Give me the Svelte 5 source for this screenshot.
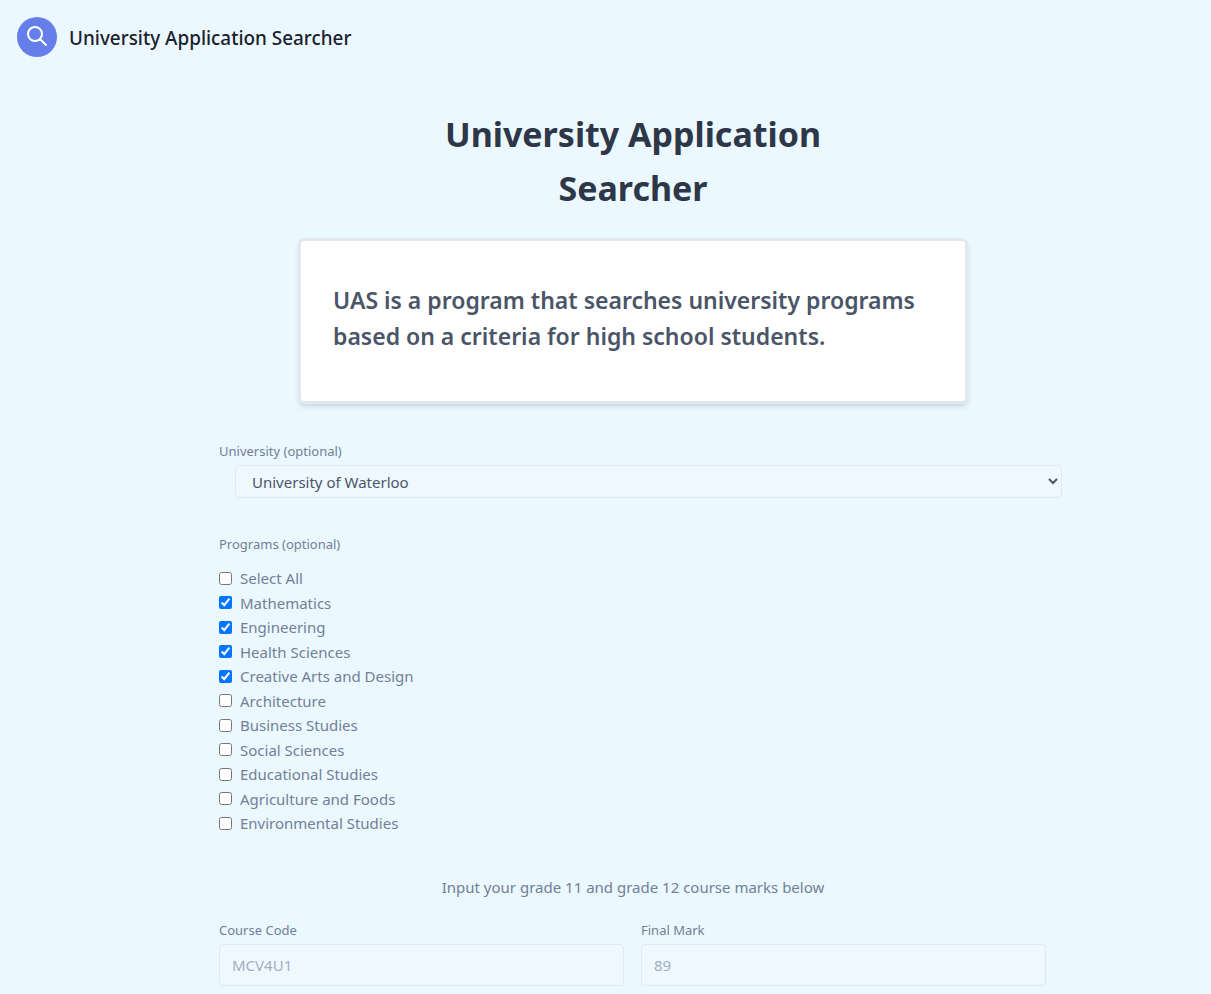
<script>
	const programs = [
		['Select All', false],
		['Mathematics', true],
		['Engineering', true],
		['Health Sciences', true],
		['Creative Arts and Design', true],
		['Architecture', false],
		['Business Studies', false],
		['Social Sciences', false],
		['Educational Studies', false],
		['Agriculture and Foods', false],
		['Environmental Studies', false]
	];
</script>

<header class="nav">
	<span class="logo">
		<svg viewBox="0 0 24 24" width="24" height="24" fill="none" stroke="white" stroke-width="2" stroke-linecap="round" stroke-linejoin="round">
			<path d="M21 21l-6-6m2-5a7 7 0 11-14 0 7 7 0 0114 0z" />
		</svg>
	</span>
	<span class="brand">University Application Searcher</span>
</header>

<main>
	<h1>University Application<br />Searcher</h1>

	<div class="card">
		<p>UAS is a program that searches university programs based on a criteria for high school students.</p>
	</div>

	<form>
		<label class="lbl" for="uni">University (optional)</label>
		<select id="uni" class="uni">
			<option>University of Waterloo</option>
		</select>

		<div class="lbl prog">Programs (optional)</div>
		<div class="checks">
			{#each programs as [name, on]}
				<label class="check"><input type="checkbox" checked={on} /><span>{name}</span></label>
			{/each}
		</div>

		<p class="hint">Input your grade 11 and grade 12 course marks below</p>

		<div class="marks">
			<div>
				<label class="lbl" for="code">Course Code</label>
				<input id="code" class="field" placeholder="MCV4U1" />
			</div>
			<div>
				<label class="lbl" for="mark">Final Mark</label>
				<input id="mark" class="field" placeholder="89" />
			</div>
		</div>
	</form>
</main>

<style>
	:global(body) {
		background: #ebf8ff;
		font-family: "Noto Sans", "Open Sans", sans-serif;
		color: #4a5568;
	}
	.nav {
		display: flex;
		align-items: center;
		height: 74px;
		padding-left: 17px;
	}
	.logo {
		display: flex;
		align-items: center;
		justify-content: center;
		width: 40px;
		height: 40px;
		border-radius: 50%;
		background: #667eea;
	}
	.logo svg {
		margin-bottom: 2px;
	}
	.brand {
		margin: 2px 0 0 12px;
		font-size: 18.9px;
		font-weight: 500;
		color: #1a202c;
	}
	main {
		width: 844px;
		margin-left: 211px;
	}
	h1 {
		margin: 33px auto 0;
		font-size: 34px;
		line-height: 54px;
		font-weight: 700;
		color: #2d3748;
		text-align: center;
	}
	.card {
		box-sizing: border-box;
		width: 670px;
		height: 166px;
		margin: 23px auto 0;
		padding: 41px 32px;
		background: #fff;
		border: 3px solid #e2e8f0;
		border-radius: 6px;
		box-shadow: 0 4px 6px -1px rgba(0, 0, 0, 0.1), 0 2px 4px -1px rgba(0, 0, 0, 0.06);
	}
	.card p {
		margin: 0;
		font-size: 23px;
		line-height: 36px;
		font-weight: 600;
		color: #4a5568;
	}
	form {
		margin-top: 37px;
		padding-left: 8px;
	}
	.lbl {
		display: block;
		font-size: 13px;
		line-height: 21px;
		color: #718096;
	}
	.uni {
		display: block;
		box-sizing: border-box;
		width: 827px;
		height: 33px;
		margin: 3px 0 0 16px;
		padding: 0 12px;
		font: inherit;
		font-size: 15px;
		color: #4a5568;
		background: #f0f8ff;
		border: 1px solid #e2e8f0;
		border-radius: 4px;
	}
	.prog {
		margin-top: 36px;
	}
	.checks {
		margin-top: 11px;
	}
	.check {
		display: flex;
		align-items: center;
		height: 24.5px;
		font-size: 15px;
		color: #718096;
	}
	.check input {
		width: 13px;
		height: 13px;
		margin: 0 8px 0 0;
	}
	.hint {
		margin: 39px 0 0;
		padding-right: 8px;
		font-size: 15px;
		line-height: 24px;
		color: #718096;
		text-align: center;
	}
	.marks {
		display: flex;
		gap: 17px;
		margin-top: 21px;
	}
	.marks > div {
		width: 405px;
	}
	.field {
		display: block;
		box-sizing: border-box;
		width: 100%;
		height: 42px;
		margin-top: 3px;
		padding: 0 12px;
		font: inherit;
		font-size: 15px;
		background: #f0f8ff;
		border: 1px solid #e2e8f0;
		border-radius: 4px;
	}
	.field::placeholder {
		color: #a0aec0;
		opacity: 1;
	}
</style>
